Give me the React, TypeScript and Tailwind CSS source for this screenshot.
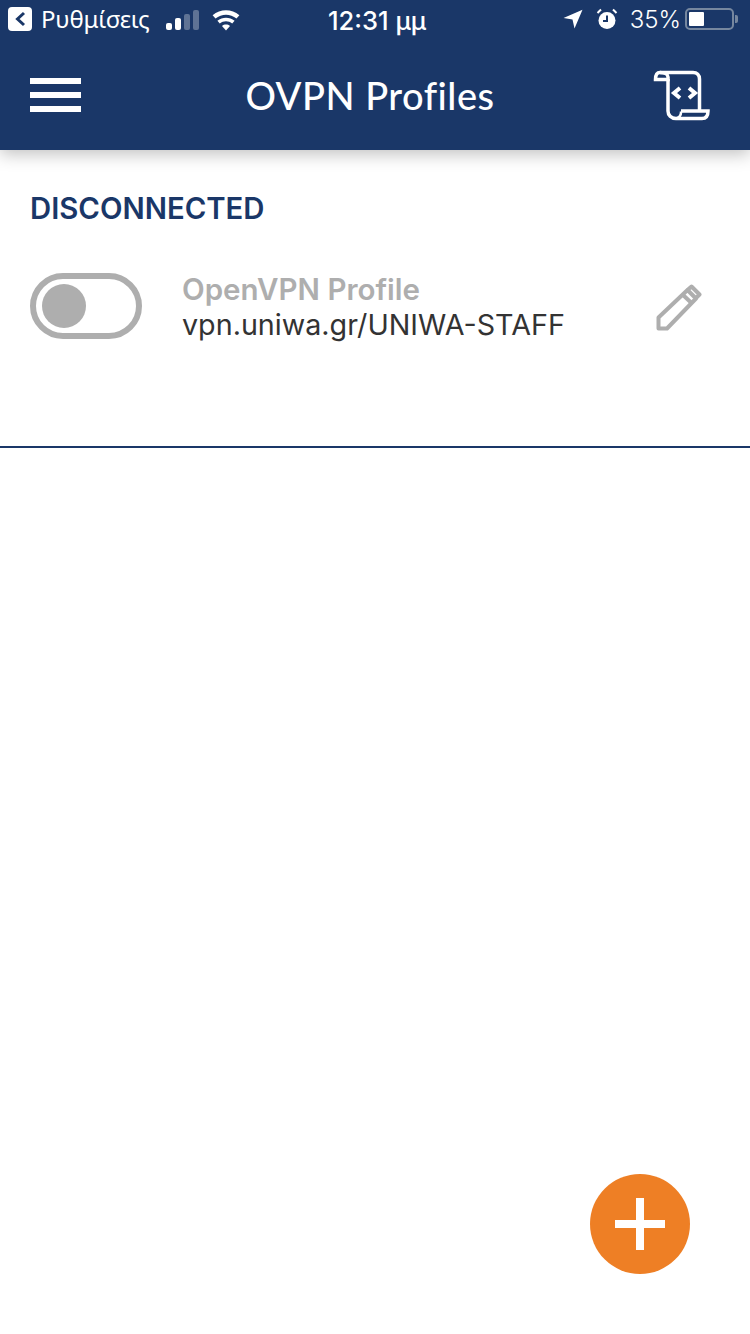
const sans = "font-['Inter','Liberation_Sans',sans-serif]";

function Signal() {
  return (
    <div className="flex items-end gap-[3px] ml-[17px] h-[20px]">
      <div className="w-[6px] h-[7px] rounded-[2px] bg-white" />
      <div className="w-[6px] h-[12px] rounded-[2px] bg-white" />
      <div className="w-[6px] h-[16px] rounded-[2px] bg-white/30" />
      <div className="w-[6px] h-[20px] rounded-[2px] bg-white/30" />
    </div>
  );
}

function Wifi() {
  return (
    <svg width="28" height="21" viewBox="0 0 28 21" className="ml-[13px]">
      <path d="M14 20.5l-4-4.6c2.3-1.9 5.700-1.900 8 0z" fill="#fff" />
      <path d="M7.800 13.500l-2.400-2.800c5-4.100 12.200-4.100 17.200 0l-2.400 2.800c-3.600-2.900-8.800-2.900-12.400 0z" fill="#fff" />
      <path d="M3.500 8.500L.6 5.200c7.800-6.500 19-6.500 26.800 0l-2.900 3.300C18.300 3.400 9.700 3.400 3.500 8.500z" fill="#fff" />
    </svg>
  );
}

function ScriptIcon() {
  return (
    <svg width="58" height="52" viewBox="0 0 58 52" fill="none" stroke="#fff" strokeWidth="3.500">
      <path d="M8 3.500h33c4 0 6.500 2.500 6.500 6.500v31" />
      <path d="M3.500 10.500h12.500V8c0-2.500-3-4.500-8-4.500-3 0-4.500 3-4.500 7z" />
      <path d="M16 10v32c0 4 3 7.500 8 7.500h26c4 0 6-3 6-7.500H29" />
      <path d="M29 42.500v1c0 3-2 5-5 6" strokeWidth="2.500" />
      <path d="M28 19l-6 5 6 5M37 19l6 5-6 5" strokeWidth="4" />
    </svg>
  );
}

function Pencil() {
  return (
    <svg width="46" height="47" viewBox="0 0 46 47" fill="none" stroke="#aeaeae" strokeWidth="4" strokeLinejoin="round">
      <path d="M2.500 33.500L31.500 6 40 14.500 11 44.500H2.500z" />
      <path d="M26.500 10.500l9 8.500" />
      <path d="M31.500 6l4-3.500 8 8-4 4" />
    </svg>
  );
}

export default function App() {
  return (
    <div className={`relative w-[750px] h-[1334px] overflow-hidden bg-white ${sans}`}>
      <header className="h-[150px] bg-[#1a3768] shadow-[0_4px_16px_rgba(0,0,0,0.25)] relative z-10">
        <div className="relative flex items-center h-[40px] pl-[8px] text-white">
          <div className="flex items-center justify-center w-[24px] h-[24px] rounded-[4px] bg-white mt-[-2px]">
            <svg width="12" height="16" viewBox="0 0 12 16" fill="none" stroke="#1a3768" strokeWidth="3">
              <path d="M10 2L3.500 8l6.500 6" />
            </svg>
          </div>
          <span className="ml-[9px] text-[24px] leading-[30px] mt-[-2px] font-['Noto_Sans','Inter',sans-serif] tracking-[-0.2px] w-[108px] whitespace-nowrap">Ρυθμίσεις</span>
          <Signal />
          <Wifi />
          <span className="absolute left-[328px] top-[6px] text-[25.500px] leading-[30px] font-medium whitespace-nowrap">12:31 μμ</span>
          <div className="absolute right-[12px] top-0 h-[40px] flex items-center">
            <svg width="20" height="20" viewBox="0 0 20 20" className="mt-[-2px]">
              <path d="M19.500 .8L11.500 19.500 9.500 10.500 .5 9z" fill="#fff" />
            </svg>
            <svg width="22" height="22" viewBox="0 0 22 22" className="ml-[13px] mt-[-2px]" stroke="#fff" fill="none">
              <circle cx="11" cy="12.500" r="8.500" fill="#fff" stroke="none" />
              <path d="M11 7.500v5.500H7" stroke="#1a3768" strokeWidth="2" />
              <path d="M1.500 5L5 1.500M20.500 5L17 1.500" strokeWidth="2" />
            </svg>
            <span className="ml-[12px] text-[24px] leading-[30px] font-light">35%</span>
            <div className="ml-[4px] w-[49px] h-[22px] rounded-[5px] border-2 border-[#76879f] p-[2px] mt-[-2px]">
              <div className="w-[15px] h-full bg-white rounded-[1px]" />
            </div>
            <div className="w-[3px] h-[8px] bg-[#76879f] rounded-r-[2px] ml-[1px] mt-[-2px]" />
          </div>
        </div>
        <div className="flex items-center justify-between h-[110px] pl-[30px] pr-[40px] text-white">
          <div className="flex flex-col gap-[8px] w-[51px]">
            <div className="h-[6px] bg-white" />
            <div className="h-[6px] bg-white" />
            <div className="h-[6px] bg-white" />
          </div>
          <h1 className="text-[38px] leading-[44px] font-medium font-['Lato',sans-serif] tracking-[0.5px] ml-[7px]">OVPN Profiles</h1>
          <ScriptIcon />
        </div>
      </header>

      <main>
        <section className="h-[298px] border-b-2 border-[#1a3768]">
          <h2 className="pl-[30px] pt-[42px] text-[29.300px] leading-[34px] font-semibold text-[#1a3768]">DISCONNECTED</h2>
          <div className="flex items-center pl-[30px] pr-[48px] mt-[45px]">
            <div className="flex items-center w-[112px] h-[66px] mt-[-2px] rounded-full border-[6px] border-[#aeaeae] pl-[6px]">
              <div className="w-[44px] h-[44px] rounded-full bg-[#aeaeae]" />
            </div>
            <div className="ml-[40px] flex-1">
              <p className="text-[29.500px] leading-[36px] font-semibold text-[#aeaeae]">OpenVPN Profile</p>
              <p className="text-[28.700px] leading-[36px] text-[#333333]">vpn.uniwa.gr/UNIWA-STAFF</p>
            </div>
            <Pencil />
          </div>
        </section>
      </main>

      <button className="absolute left-[590px] top-[1174px] flex items-center justify-center w-[100px] h-[100px] rounded-full bg-[#ee7f25]">
        <svg width="50" height="52" viewBox="0 0 50 52">
          <path d="M21 0h8v22h21v8H29v22h-8V30H0v-8h21z" fill="#fff" />
        </svg>
      </button>
    </div>
  );
}
